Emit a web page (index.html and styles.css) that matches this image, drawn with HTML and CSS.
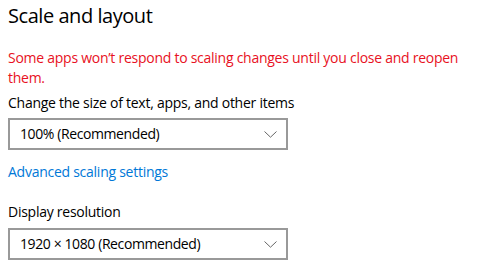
FILE: index.html
```html
<!DOCTYPE html>
<html>
<head>
<meta charset="utf-8">
<link rel="stylesheet" href="styles.css">
</head>
<body>
<main class="page">
  <h1 class="title">Scale and layout</h1>
  <p class="warning">Some apps won’t respond to scaling changes until you close and reopen them.</p>
  <p class="label">Change the size of text, apps, and other items</p>
  <div class="select">
    <span class="value">100% (Recommended)</span>
    <svg class="chev" width="13" height="7" viewBox="0 0 13 7"><path d="M0.5 0.5 L6.5 6.2 L12.5 0.5" fill="none" stroke="#666" stroke-width="1"/></svg>
  </div>
  <a class="link" href="#">Advanced scaling settings</a>
  <p class="label label-2">Display resolution</p>
  <div class="select select-2">
    <span class="value">1920 × 1080 (Recommended)</span>
    <svg class="chev" width="13" height="7" viewBox="0 0 13 7"><path d="M0.5 0.5 L6.5 6.2 L12.5 0.5" fill="none" stroke="#666" stroke-width="1"/></svg>
  </div>
</main>
</body>
</html>
```
FILE: styles.css
```css
html, body {
  margin: 0;
  padding: 0;
  background: #ffffff;
}
.page {
  display: flex;
  flex-direction: column;
  align-items: flex-start;
  padding: 0 0 0 8px;
  font-family: "Open Sans", "Noto Sans", sans-serif;
  color: #000;
  letter-spacing: -0.26px;
}
.title {
  margin: 2px 0 0 0;
  font-size: 20px;
  font-weight: 400;
  line-height: 28px;
  letter-spacing: -0.45px;
}
.warning {
  margin: 18px 0 0 0;
  font-size: 14px;
  line-height: 20px;
  color: #e81123;
  width: 470px;
}
.label {
  margin: 5px 0 0 0;
  font-size: 14px;
  line-height: 20px;
}
.select {
  margin-top: 5px;
  box-sizing: border-box;
  width: 280px;
  height: 32px;
  border: 2px solid #999;
  display: flex;
  align-items: center;
  justify-content: space-between;
  padding: 0 9px 0 10px;
}
.select-2 {
  margin-top: 6px;
}
.value {
  font-size: 14px;
  line-height: 20px;
  letter-spacing: -0.4px;
}
.chev {
  display: block;
}
.link {
  margin-top: 12px;
  font-size: 14px;
  line-height: 20px;
  color: #0078d7;
  text-decoration: none;
}
.label-2 {
  margin-top: 20px;
}
```
